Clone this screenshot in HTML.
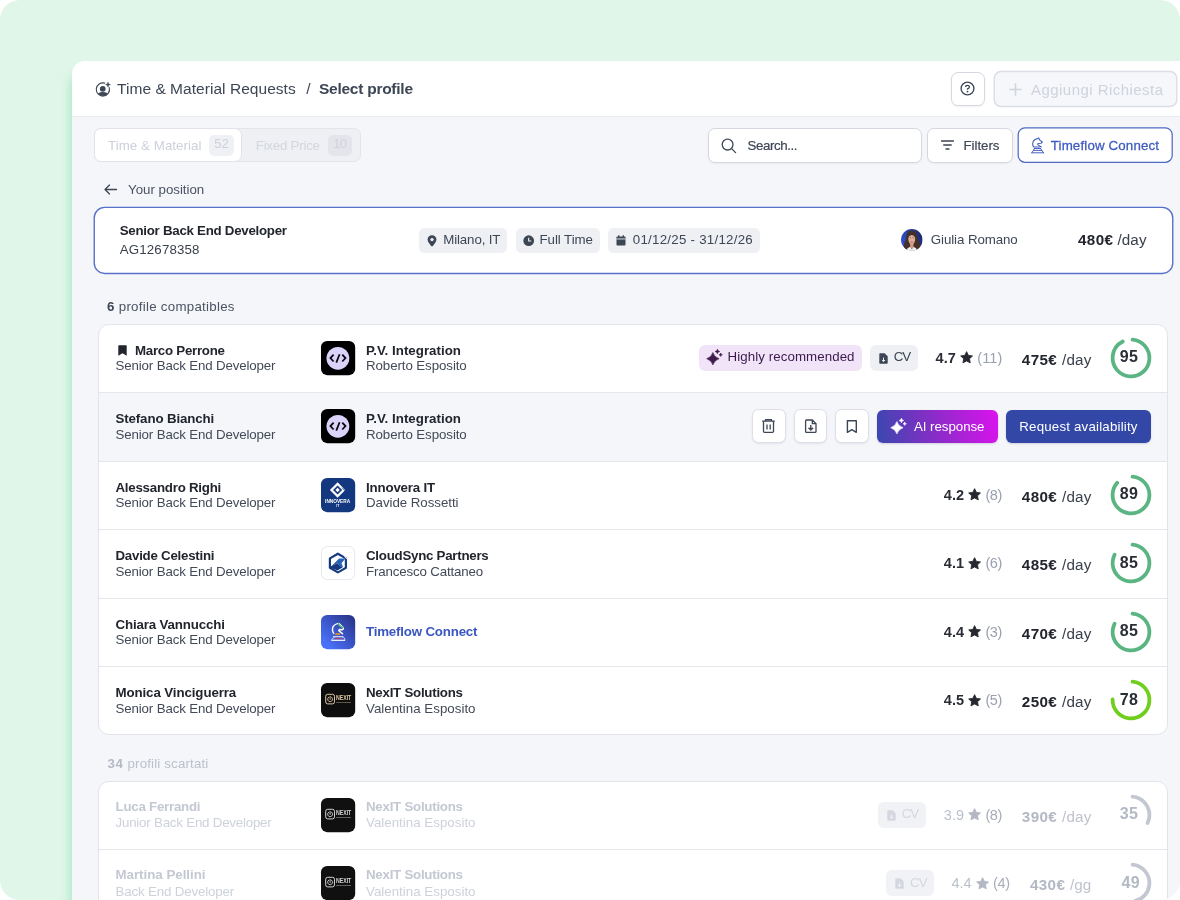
<!DOCTYPE html>
<html lang="en"><head><meta charset="utf-8"><title>Select profile</title>
<style>
*{box-sizing:border-box}
html,body{margin:0;padding:0;background:#fff}
body{width:1180px;height:900px;overflow:hidden;position:relative;font-family:"Liberation Sans",sans-serif;}
.bg{position:absolute;left:0;top:0;width:1180px;height:900px;background:#dff6e8;border-radius:20px;overflow:hidden}
.card{position:absolute;left:72.1px;top:61px;width:1300px;height:1000px;background:#f5f6fa;border-radius:13px 0 0 0;box-shadow:-2px 12px 9px 0 rgba(100,215,150,.42)}
.hdr{position:absolute;left:72.1px;top:61px;width:1300px;height:55.5px;background:#fff;border-radius:13px 0 0 0;border-bottom:1.5px solid #e9ebf0}
.t{position:absolute;line-height:1;white-space:nowrap}
.bg{will-change:transform}
.box{position:absolute;}
svg{position:absolute;overflow:visible}
</style></head>
<body>
<div class="bg">
<div class="card"></div><div class="hdr"></div>
<svg style="left:94.5px;top:81.5px" width="16" height="16" viewBox="0 0 16 16"><path d="M14.2 5.6A6.6 6.6 0 1 1 9.7 1.15" fill="none" stroke="#3d4655" stroke-width="1.1" stroke-linecap="round"/><circle cx="7.75" cy="6.8" r="2.9" fill="#3d4655"/><path d="M2.9 11.3Q7.8 8.6 12.7 11.3Q10.9 14.1 7.8 14.1Q4.7 14.1 2.9 11.3Z" fill="#3d4655"/><path d="M13 0.2Q13.2 2.4 15.4 2.6Q13.2 2.8 13 5Q12.8 2.8 10.6 2.6Q12.8 2.4 13 0.2Z" fill="#3d4655" stroke="#3d4655" stroke-width="0.5" stroke-linejoin="round"/></svg>
<span class="t" style="left:117px;top:81.28px;font-size:15.5px;color:#3d4655;letter-spacing:0.043px;">Time &amp; Material Requests</span>
<span class="t" style="left:306.3px;top:81.28px;font-size:15.5px;color:#3d4655;">/</span>
<span class="t" style="left:319px;top:81.28px;font-size:15.5px;color:#3d4655;font-weight:700;letter-spacing:-0.257px;">Select profile</span>
<div class="box" style="left:951px;top:72px;width:34px;height:34px;border:1px solid #d5d8e0;border-radius:7px;background:#fff;box-shadow:0 1px 2px rgba(0,0,0,.06)"></div>
<svg style="left:960px;top:81.2px" width="15" height="15" viewBox="0 0 15 15"><circle cx="7.5" cy="7.5" r="6.4" fill="none" stroke="#3d4655" stroke-width="1.35"/><path d="M5.6 6.1 Q5.6 4.3 7.5 4.3 Q9.4 4.3 9.4 6 Q9.4 7.1 7.5 7.9 L7.5 8.7" fill="none" stroke="#3d4655" stroke-width="1.3"/><circle cx="7.5" cy="10.6" r="0.9" fill="#3d4655"/></svg>
<svg style="left:992px;top:69px" width="188" height="40" viewBox="0 0 188 40"><rect x="2.2" y="2.5" width="182.6" height="35" rx="6.8" fill="#f6f7fb" stroke="#dadde6" stroke-width="1.4"/></svg>
<svg style="left:1008.5px;top:82.5px" width="13" height="13" viewBox="0 0 13 13"><path d="M6.5 0.3V12.7M0.3 6.5H12.7" stroke="#d0d4dd" stroke-width="1.5"/></svg>
<span class="t" style="left:1031px;top:81.50px;font-size:15px;color:#cfd3dc;letter-spacing:0.456px;">Aggiungi Richiesta</span>
<div class="box" style="left:94px;top:128px;width:266.5px;height:34px;border:1px solid #e3e5eb;border-radius:7px;background:#eff0f4"></div>
<div class="box" style="left:94px;top:128px;width:148px;height:34px;border:1px solid #e1e3ea;border-radius:7px;background:#fff"></div>
<span class="t" style="left:108px;top:138.74px;font-size:13.3px;color:#ccd0da;letter-spacing:0.064px;">Time &amp; Material</span>
<div class="box" style="left:209px;top:134.5px;width:25px;height:21.5px;border-radius:5px;background:#f0f1f5"></div>
<span class="t" style="left:214.25px;top:137.40px;font-size:13px;color:#ccd0da;letter-spacing:0.031px;">52</span>
<span class="t" style="left:255.75px;top:138.74px;font-size:13.3px;color:#d3d6de;letter-spacing:-0.227px;">Fixed Price</span>
<div class="box" style="left:327.5px;top:134.5px;width:24.5px;height:21.5px;border-radius:5px;background:#e3e5ea"></div>
<span class="t" style="left:333.25px;top:137.40px;font-size:13px;color:#cfd2da;letter-spacing:-0.719px;">10</span>
<div class="box" style="left:708px;top:128px;width:214px;height:34.5px;border:1px solid #d5d8e0;border-radius:7px;background:#fff;box-shadow:0 1px 2px rgba(0,0,0,.05)"></div>
<svg style="left:721px;top:138px" width="16" height="16" viewBox="0 0 16 16"><circle cx="6.6" cy="6.6" r="5.4" fill="none" stroke="#3d4655" stroke-width="1.3"/><path d="M10.6 10.6L14.6 14.6" stroke="#3d4655" stroke-width="1.3" stroke-linecap="round"/></svg>
<span class="t" style="left:747.5px;top:139.14px;font-size:13.3px;color:#3d4655;letter-spacing:-0.402px;-webkit-text-stroke:0.2px #3d4655;">Search...</span>
<div class="box" style="left:926.5px;top:128px;width:86.5px;height:34.5px;border:1px solid #d5d8e0;border-radius:7px;background:#fff;box-shadow:0 1px 2px rgba(0,0,0,.05)"></div>
<svg style="left:941px;top:140px" width="13" height="10" viewBox="0 0 13 10"><path d="M0.5 1H12.5M2.7 5H10.3M5 9H8" stroke="#3d4655" stroke-width="1.3" stroke-linecap="round"/></svg>
<span class="t" style="left:963.5px;top:139.14px;font-size:13.3px;color:#3d4655;letter-spacing:-0.034px;-webkit-text-stroke:0.2px #3d4655;">Filters</span>
<svg style="left:1016px;top:126px" width="160" height="39" viewBox="0 0 160 39"><rect x="2.2" y="1.9" width="154" height="34.4" rx="6.8" fill="#fff" stroke="#4f6ac4" stroke-width="1.25"/></svg>
<svg style="left:1030.5px;top:136.5px" width="14" height="17" viewBox="0 0 14 17"><g fill="none" stroke="#3f5bbf" stroke-width="1.1" stroke-linejoin="round" stroke-linecap="round"><path d="M7.8 1L6.5 1.6Q2.2 2.4 1.7 6.2Q1.5 8.6 2.7 10H8.3M7.8 1L8.5 2.9L11.3 5L10 6.3L7 6.5Q6.3 7.4 7.4 8.1L10.3 10"/><path d="M3.4 11.5H9.6M2.4 13.4H10.8M0.8 15.8H12.6M3.4 11.5L2.4 13.4L0.8 15.8M9.6 11.5L10.8 13.4L12.6 15.8" stroke-width="0.95"/></g></svg>
<span class="t" style="left:1050.75px;top:139.14px;font-size:13.3px;color:#3f5bbf;letter-spacing:0.155px;-webkit-text-stroke:0.28px #3f5bbf;">Timeflow Connect</span>
<svg style="left:104px;top:184px" width="13" height="11" viewBox="0 0 13 11"><path d="M12.5 5.5H1M5.5 1L1 5.5L5.5 10" fill="none" stroke="#3d4655" stroke-width="1.3" stroke-linecap="round" stroke-linejoin="round"/></svg>
<span class="t" style="left:128px;top:183.04px;font-size:13.3px;color:#4b5362;letter-spacing:-0.013px;">Your position</span>
<svg style="left:93px;top:206px" width="1082" height="69" viewBox="0 0 1082 69"><rect x="1.25" y="1.35" width="1078.5" height="66.1" rx="10.5" fill="#fff" stroke="#5571c9" stroke-width="1.4"/></svg>
<span class="t" style="left:119.75px;top:224.24px;font-size:13.3px;color:#22252d;font-weight:700;letter-spacing:-0.268px;">Senior Back End Developer</span>
<span class="t" style="left:119.75px;top:242.84px;font-size:13.3px;color:#3a404c;letter-spacing:0.153px;">AG12678358</span>
<div class="box" style="left:419.2px;top:227.8px;width:87.8px;height:25.2px;border-radius:5.5px;background:#eef0f4"></div>
<svg style="left:427px;top:235px" width="10" height="12" viewBox="0 0 10 12"><path d="M5 0.3C2.4 0.3 0.6 2.2 0.6 4.6C0.6 7.6 5 11.8 5 11.8C5 11.8 9.4 7.6 9.4 4.6C9.4 2.2 7.6 0.3 5 0.3Z" fill="#3d4655"/><circle cx="5" cy="4.6" r="1.7" fill="#eef0f4"/></svg>
<span class="t" style="left:443.25px;top:233.14px;font-size:13.3px;color:#3d4655;letter-spacing:-0.127px;">Milano, IT</span>
<div class="box" style="left:515.8px;top:227.8px;width:83.8px;height:25.2px;border-radius:5.5px;background:#eef0f4"></div>
<svg style="left:522.9px;top:234.6px" width="11.4" height="11.4" viewBox="0 0 11 11"><circle cx="5.5" cy="5.5" r="5.2" fill="#3d4655"/><path d="M5.5 2.6V5.8H8" fill="none" stroke="#eef0f4" stroke-width="1.1"/></svg>
<span class="t" style="left:539.5px;top:233.14px;font-size:13.3px;color:#3d4655;letter-spacing:-0.055px;">Full Time</span>
<div class="box" style="left:608.3px;top:227.8px;width:151.8px;height:25.2px;border-radius:5.5px;background:#eef0f4"></div>
<svg style="left:616px;top:235px" width="10" height="11" viewBox="0 0 10 11"><path d="M0.5 2.2Q0.5 1.4 1.3 1.4H8.7Q9.5 1.4 9.5 2.2V9.8Q9.5 10.6 8.7 10.6H1.3Q0.5 10.6 0.5 9.8Z" fill="#3d4655"/><rect x="2.1" y="0.2" width="1.3" height="2.2" fill="#3d4655"/><rect x="6.6" y="0.2" width="1.3" height="2.2" fill="#3d4655"/><rect x="0.5" y="3.5" width="9" height="0.9" fill="#eef0f4"/></svg>
<span class="t" style="left:632.75px;top:233.14px;font-size:13.3px;color:#3d4655;letter-spacing:0.259px;">01/12/25 - 31/12/26</span>
<svg style="left:900.7px;top:229.4px" width="21.6" height="21.6" viewBox="0 0 21.6 21.6"><defs><clipPath id="av"><circle cx="10.8" cy="10.8" r="10.8"/></clipPath><linearGradient id="avg" x1="0" y1="0.6" x2="1" y2="0.3"><stop offset="0" stop-color="#3152cc"/><stop offset="1" stop-color="#1a2872"/></linearGradient></defs><g clip-path="url(#av)"><rect width="21.6" height="21.6" fill="url(#avg)"/><path d="M10.8 1.4C6.5 1.4 5.4 5 5.2 8.5C5 12 2.6 14 2.8 17C3 19.5 5 20.6 6.5 21L15.5 21C17.5 20.4 19.6 19 19.6 16.5C19.6 13.5 17 12 16.6 8.5C16.2 5 15.2 1.4 10.8 1.4Z" fill="#46302a"/><rect x="9.1" y="13.5" width="3.4" height="6" fill="#cd9a80"/><ellipse cx="10.75" cy="10" rx="3.45" ry="5.3" fill="#dcae94"/><path d="M7 8.6Q7.6 3.9 10.8 3.7Q14 3.9 14.5 8.6Q12.8 5.9 10.8 5.9Q8.8 5.9 7 8.6Z" fill="#46302a"/><ellipse cx="9.3" cy="8.7" rx="0.75" ry="0.45" fill="#6a4548"/><ellipse cx="12.2" cy="8.7" rx="0.75" ry="0.45" fill="#6a4548"/><ellipse cx="10.75" cy="13.1" rx="1.15" ry="0.5" fill="#b24f60"/><path d="M5.2 21.8Q6.3 18.4 9 18L10.8 20.2L12.7 18Q15.4 18.4 16.5 21.8Z" fill="#f3efec"/></g></svg>
<span class="t" style="left:930.75px;top:233.24px;font-size:13.3px;color:#3d4655;letter-spacing:-0.079px;">Giulia Romano</span>
<span class="t" style="left:1078px;top:232.23px;font-size:15.2px;color:#22252d;font-weight:700;letter-spacing:0.401px;">480€</span>
<span class="t" style="left:1117.5px;top:232.23px;font-size:15.2px;color:#3a404c;letter-spacing:0.094px;">/day</span>
<span class="t" style="left:107px;top:300.14px;font-size:13.3px;color:#3d4655;font-weight:700;">6</span>
<span class="t" style="left:118.75px;top:300.14px;font-size:13.3px;color:#4b5362;letter-spacing:0.271px;">profile compatibles</span>
<div class="box" style="left:98.3px;top:324px;width:1069.7px;height:411px;border:1px solid #e2e4ea;border-radius:11px;background:#fff;overflow:hidden">
<div class="box" style="left:0;top:67px;width:1070px;height:69px;background:#f5f6fa"></div>
<div class="box" style="left:0;top:67px;width:1070px;height:1px;background:#e4e6ec"></div>
<div class="box" style="left:0;top:136px;width:1070px;height:1px;background:#e4e6ec"></div>
<div class="box" style="left:0;top:204px;width:1070px;height:1px;background:#e4e6ec"></div>
<div class="box" style="left:0;top:273px;width:1070px;height:1px;background:#e4e6ec"></div>
<div class="box" style="left:0;top:341px;width:1070px;height:1px;background:#e4e6ec"></div>
</div>
<svg style="left:117.5px;top:344.6px" width="9" height="11" viewBox="0 0 9 11"><path d="M0.3 0.8Q0.3 0.2 0.9 0.2H8.1Q8.7 0.2 8.7 0.8V10.8L4.5 8.2L0.3 10.8Z" fill="#22252d"/></svg>
<span class="t" style="left:135px;top:343.54px;font-size:13.3px;color:#22252d;font-weight:700;letter-spacing:-0.260px;">Marco Perrone</span>
<span class="t" style="left:115.5px;top:359.29px;font-size:13.3px;color:#434a57;letter-spacing:-0.140px;">Senior Back End Developer</span>
<svg style="left:320.9px;top:340.90px" width="34.2" height="34.2" viewBox="0 0 34.2 34.2"><rect width="34.2" height="34.2" rx="6.2" fill="#000"/><circle cx="16.9" cy="17.3" r="11.4" fill="#dcd3fa"/><path d="M12.6 13.7L9.4 17.1L12.6 20.5M21.3 13.7L24.5 17.1L21.3 20.5M18.6 13.2L15.3 21.6" fill="none" stroke="#08080c" stroke-width="1.75"/></svg>
<span class="t" style="left:366px;top:343.54px;font-size:13.3px;color:#22252d;font-weight:700;letter-spacing:0.027px;">P.V. Integration</span>
<span class="t" style="left:366px;top:359.29px;font-size:13.3px;color:#434a57;letter-spacing:-0.083px;">Roberto Esposito</span>
<span class="t" style="left:935.5999999999999px;top:350.53px;font-size:14.5px;color:#2a2d35;font-weight:700;letter-spacing:0.014px;">4.7</span>
<svg style="left:959.80px;top:351.00px" width="13.2" height="13" viewBox="0 0 13.2 13"><path d="M6.60 0.65L8.39 4.38L12.50 4.93L9.50 7.79L10.24 11.87L6.60 9.90L2.96 11.87L3.70 7.79L0.70 4.93L4.81 4.38Z" fill="#26282f" stroke="#26282f" stroke-width="0.9" stroke-linejoin="round"/></svg>
<span class="t" style="left:977.1999999999999px;top:350.53px;font-size:14.5px;color:#9aa1ae;letter-spacing:0.160px;">(11)</span>
<span class="t" style="left:1021.8px;top:351.63px;font-size:15.2px;color:#22252d;font-weight:700;letter-spacing:0.401px;">475€</span>
<span class="t" style="left:1062.0px;top:351.63px;font-size:15.2px;color:#3a404c;letter-spacing:0.194px;">/day</span>
<svg style="left:1108.8px;top:335.90000000000003px" width="44" height="44" viewBox="-22 -22 44 44"><circle r="18.4" fill="none" stroke="#5bb582" stroke-width="3.8" stroke-linecap="round" stroke-dasharray="104.83 115.61" transform="rotate(-85.2)"/></svg>
<span class="t" style="left:1078.9px;width:100px;text-align:center;top:349.16px;font-size:16px;color:#2a2d35;font-weight:700;letter-spacing:0.2px;">95</span>
<span class="t" style="left:115.5px;top:412.04px;font-size:13.3px;color:#22252d;font-weight:700;letter-spacing:-0.124px;">Stefano Bianchi</span>
<span class="t" style="left:115.5px;top:427.79px;font-size:13.3px;color:#434a57;letter-spacing:-0.140px;">Senior Back End Developer</span>
<svg style="left:320.9px;top:409.40px" width="34.2" height="34.2" viewBox="0 0 34.2 34.2"><rect width="34.2" height="34.2" rx="6.2" fill="#000"/><circle cx="16.9" cy="17.3" r="11.4" fill="#dcd3fa"/><path d="M12.6 13.7L9.4 17.1L12.6 20.5M21.3 13.7L24.5 17.1L21.3 20.5M18.6 13.2L15.3 21.6" fill="none" stroke="#08080c" stroke-width="1.75"/></svg>
<span class="t" style="left:366px;top:412.04px;font-size:13.3px;color:#22252d;font-weight:700;letter-spacing:0.027px;">P.V. Integration</span>
<span class="t" style="left:366px;top:427.79px;font-size:13.3px;color:#434a57;letter-spacing:-0.083px;">Roberto Esposito</span>
<span class="t" style="left:115.5px;top:480.54px;font-size:13.3px;color:#22252d;font-weight:700;letter-spacing:-0.241px;">Alessandro Righi</span>
<span class="t" style="left:115.5px;top:496.29px;font-size:13.3px;color:#434a57;letter-spacing:-0.140px;">Senior Back End Developer</span>
<svg style="left:320.9px;top:477.90px" width="34.2" height="34.2" viewBox="0 0 34.2 34.2"><rect width="34.2" height="34.2" rx="6.2" fill="#14387f"/><path d="M16.6 4.2L24.3 12L16.6 19.8L8.9 12Z" fill="#fff"/><path d="M16.6 7.4L21.2 12L16.6 16.6L12 12Z" fill="#14387f"/><path d="M16.6 9.8L18.8 12L16.6 14.2L14.4 12Z" fill="#fff"/><path d="M21 9.6L24.6 13.2" stroke="#14387f" stroke-width="0.9"/><path d="M10.6 13.4L16.6 19.4" stroke="#14387f" stroke-width="0"/><text x="16.6" y="24.9" font-size="4.7" font-weight="700" fill="#fff" text-anchor="middle" font-family="Liberation Sans, sans-serif" textLength="25" lengthAdjust="spacingAndGlyphs">INNOVERA</text><text x="16.7" y="29" font-size="3.3" font-weight="700" fill="#fff" text-anchor="middle" font-family="Liberation Sans, sans-serif">IT</text></svg>
<span class="t" style="left:366px;top:480.54px;font-size:13.3px;color:#22252d;font-weight:700;letter-spacing:-0.169px;">Innovera IT</span>
<span class="t" style="left:366px;top:496.29px;font-size:13.3px;color:#434a57;letter-spacing:-0.045px;">Davide Rossetti</span>
<span class="t" style="left:943.8px;top:487.53px;font-size:14.5px;color:#2a2d35;font-weight:700;letter-spacing:0.014px;">4.2</span>
<svg style="left:968.00px;top:488.00px" width="13.2" height="13" viewBox="0 0 13.2 13"><path d="M6.60 0.65L8.39 4.38L12.50 4.93L9.50 7.79L10.24 11.87L6.60 9.90L2.96 11.87L3.70 7.79L0.70 4.93L4.81 4.38Z" fill="#26282f" stroke="#26282f" stroke-width="0.9" stroke-linejoin="round"/></svg>
<span class="t" style="left:985.4px;top:487.53px;font-size:14.5px;color:#9aa1ae;letter-spacing:-0.367px;">(8)</span>
<span class="t" style="left:1021.8px;top:488.63px;font-size:15.2px;color:#22252d;font-weight:700;letter-spacing:0.401px;">480€</span>
<span class="t" style="left:1062.0px;top:488.63px;font-size:15.2px;color:#3a404c;letter-spacing:0.194px;">/day</span>
<svg style="left:1108.8px;top:472.90000000000003px" width="44" height="44" viewBox="-22 -22 44 44"><circle r="18.4" fill="none" stroke="#5bb582" stroke-width="3.8" stroke-linecap="round" stroke-dasharray="97.89 115.61" transform="rotate(-85.2)"/></svg>
<span class="t" style="left:1078.9px;width:100px;text-align:center;top:486.16px;font-size:16px;color:#2a2d35;font-weight:700;letter-spacing:0.2px;">89</span>
<span class="t" style="left:115.5px;top:549.04px;font-size:13.3px;color:#22252d;font-weight:700;letter-spacing:-0.249px;">Davide Celestini</span>
<span class="t" style="left:115.5px;top:564.79px;font-size:13.3px;color:#434a57;letter-spacing:-0.140px;">Senior Back End Developer</span>
<svg style="left:320.9px;top:546.40px" width="34.2" height="34.2" viewBox="0 0 34.2 34.2"><rect x="0.5" y="0.5" width="33.2" height="33.2" rx="6" fill="#fff" stroke="#e6e8ee"/><path d="M16.9 7.7L24.9 12.4V21.7L16.9 26.4L8.9 21.7V12.4Z" fill="none" stroke="#163a80" stroke-width="2.2" stroke-linejoin="round"/><path d="M23.4 10.4L26 13.2" stroke="#fff" stroke-width="0.9"/><path d="M18.1 12.5H24.4L20.5 17.2L22.2 21.2L21.5 21.8L16.1 17.2L10.6 20Z" fill="#2a62b8"/><path d="M10 20.2L16.1 17.2L21.6 21.7L16.7 24.6L10 21.8Z" fill="#163a80"/><path d="M16.8 24.9L23.6 20.6" stroke="#fff" stroke-width="0.8"/></svg>
<span class="t" style="left:366px;top:549.04px;font-size:13.3px;color:#22252d;font-weight:700;letter-spacing:-0.256px;">CloudSync Partners</span>
<span class="t" style="left:366px;top:564.79px;font-size:13.3px;color:#434a57;letter-spacing:-0.147px;">Francesco Cattaneo</span>
<span class="t" style="left:943.8px;top:556.03px;font-size:14.5px;color:#2a2d35;font-weight:700;letter-spacing:0.014px;">4.1</span>
<svg style="left:968.00px;top:556.50px" width="13.2" height="13" viewBox="0 0 13.2 13"><path d="M6.60 0.65L8.39 4.38L12.50 4.93L9.50 7.79L10.24 11.87L6.60 9.90L2.96 11.87L3.70 7.79L0.70 4.93L4.81 4.38Z" fill="#26282f" stroke="#26282f" stroke-width="0.9" stroke-linejoin="round"/></svg>
<span class="t" style="left:985.4px;top:556.03px;font-size:14.5px;color:#9aa1ae;letter-spacing:-0.367px;">(6)</span>
<span class="t" style="left:1021.8px;top:557.13px;font-size:15.2px;color:#22252d;font-weight:700;letter-spacing:0.401px;">485€</span>
<span class="t" style="left:1062.0px;top:557.13px;font-size:15.2px;color:#3a404c;letter-spacing:0.194px;">/day</span>
<svg style="left:1108.8px;top:541.4px" width="44" height="44" viewBox="-22 -22 44 44"><circle r="18.4" fill="none" stroke="#5bb582" stroke-width="3.8" stroke-linecap="round" stroke-dasharray="93.27 115.61" transform="rotate(-85.2)"/></svg>
<span class="t" style="left:1078.9px;width:100px;text-align:center;top:554.66px;font-size:16px;color:#2a2d35;font-weight:700;letter-spacing:0.2px;">85</span>
<span class="t" style="left:115.5px;top:617.54px;font-size:13.3px;color:#22252d;font-weight:700;letter-spacing:-0.140px;">Chiara Vannucchi</span>
<span class="t" style="left:115.5px;top:633.29px;font-size:13.3px;color:#434a57;letter-spacing:-0.140px;">Senior Back End Developer</span>
<svg style="left:320.9px;top:614.90px" width="34.2" height="34.2" viewBox="0 0 34.2 34.2"><defs><linearGradient id="tfg" x1="1" y1="0" x2="0.15" y2="0.85"><stop offset="0" stop-color="#273080"/><stop offset="0.55" stop-color="#3a53c4"/><stop offset="1" stop-color="#4a72f8"/></linearGradient></defs><rect width="34.2" height="34.2" rx="6.2" fill="url(#tfg)"/><path d="M17.9 8.4Q12.2 9.2 11.5 13.6Q11.2 16.6 12.6 18.4M17.9 8.4L22 12.6L22.4 13.8L21 14.8L18.2 14.6Q17.4 15.6 18.6 16.4L21.6 18.8" fill="none" stroke="#fff" stroke-width="1.45" stroke-linejoin="round" stroke-linecap="round"/><path d="M17.6 8.4L18.4 10.6L22 12.6" fill="none" stroke="#4cc46a" stroke-width="1.3" stroke-linecap="round" stroke-linejoin="round"/><rect x="14.2" y="18.2" width="4.9" height="1.7" fill="#e0962a"/><path d="M11.7 21.3H22.2L23 22.6H12.6Z" fill="#fff"/><rect x="13.9" y="23.2" width="6.9" height="0.9" fill="#e8364a"/><rect x="13.9" y="22.5" width="6.9" height="0.7" fill="#3547b0"/><path d="M10.3 24.7H24.2V25.9H10.3Z" fill="#fff"/><path d="M12.6 22.6L10.6 24.7M23 22.6L24 24.7" stroke="#fff" stroke-width="0.8"/></svg>
<span class="t" style="left:366px;top:625.34px;font-size:13.3px;color:#3a56c0;font-weight:700;letter-spacing:-0.184px;">Timeflow Connect</span>
<span class="t" style="left:943.8px;top:624.53px;font-size:14.5px;color:#2a2d35;font-weight:700;letter-spacing:0.014px;">4.4</span>
<svg style="left:968.00px;top:625.00px" width="13.2" height="13" viewBox="0 0 13.2 13"><path d="M6.60 0.65L8.39 4.38L12.50 4.93L9.50 7.79L10.24 11.87L6.60 9.90L2.96 11.87L3.70 7.79L0.70 4.93L4.81 4.38Z" fill="#26282f" stroke="#26282f" stroke-width="0.9" stroke-linejoin="round"/></svg>
<span class="t" style="left:985.4px;top:624.53px;font-size:14.5px;color:#9aa1ae;letter-spacing:-0.367px;">(3)</span>
<span class="t" style="left:1021.8px;top:625.63px;font-size:15.2px;color:#22252d;font-weight:700;letter-spacing:0.401px;">470€</span>
<span class="t" style="left:1062.0px;top:625.63px;font-size:15.2px;color:#3a404c;letter-spacing:0.194px;">/day</span>
<svg style="left:1108.8px;top:609.9px" width="44" height="44" viewBox="-22 -22 44 44"><circle r="18.4" fill="none" stroke="#5bb582" stroke-width="3.8" stroke-linecap="round" stroke-dasharray="93.27 115.61" transform="rotate(-85.2)"/></svg>
<span class="t" style="left:1078.9px;width:100px;text-align:center;top:623.16px;font-size:16px;color:#2a2d35;font-weight:700;letter-spacing:0.2px;">85</span>
<span class="t" style="left:115.5px;top:686.04px;font-size:13.3px;color:#22252d;font-weight:700;letter-spacing:-0.098px;">Monica Vinciguerra</span>
<span class="t" style="left:115.5px;top:701.79px;font-size:13.3px;color:#434a57;letter-spacing:-0.140px;">Senior Back End Developer</span>
<svg style="left:320.9px;top:683.40px" width="34.2" height="34.2" viewBox="0 0 34.2 34.2"><rect width="34.2" height="34.2" rx="6.2" fill="#0d0d0d"/><rect x="4.7" y="11.3" width="8.8" height="9.6" rx="2" fill="none" stroke="#dcc6a2" stroke-width="1"/><path d="M9.1 13.3V16.4M7.6 14.2Q6.2 15.4 6.8 17.1Q7.5 18.7 9.1 18.7Q10.7 18.7 11.4 17.1Q12 15.4 10.6 14.2" fill="none" stroke="#dcc6a2" stroke-width="0.9" stroke-linecap="round"/><text x="14.9" y="17.1" font-size="6.8" font-weight="700" fill="#dcc6a2" font-family="Liberation Sans, sans-serif" textLength="15.4" lengthAdjust="spacingAndGlyphs">NEXIT</text><text x="15.2" y="20.3" font-size="2.4" font-weight="700" fill="#c9b08a" font-family="Liberation Sans, sans-serif" textLength="14.9" lengthAdjust="spacingAndGlyphs">SOLUTIONS</text></svg>
<span class="t" style="left:366px;top:686.04px;font-size:13.3px;color:#22252d;font-weight:700;letter-spacing:-0.249px;">NexIT Solutions</span>
<span class="t" style="left:366px;top:701.79px;font-size:13.3px;color:#434a57;letter-spacing:0.020px;">Valentina Esposito</span>
<span class="t" style="left:943.8px;top:693.03px;font-size:14.5px;color:#2a2d35;font-weight:700;letter-spacing:0.014px;">4.5</span>
<svg style="left:968.00px;top:693.50px" width="13.2" height="13" viewBox="0 0 13.2 13"><path d="M6.60 0.65L8.39 4.38L12.50 4.93L9.50 7.79L10.24 11.87L6.60 9.90L2.96 11.87L3.70 7.79L0.70 4.93L4.81 4.38Z" fill="#26282f" stroke="#26282f" stroke-width="0.9" stroke-linejoin="round"/></svg>
<span class="t" style="left:985.4px;top:693.03px;font-size:14.5px;color:#9aa1ae;letter-spacing:-0.367px;">(5)</span>
<span class="t" style="left:1021.8px;top:694.13px;font-size:15.2px;color:#22252d;font-weight:700;letter-spacing:0.401px;">250€</span>
<span class="t" style="left:1062.0px;top:694.13px;font-size:15.2px;color:#3a404c;letter-spacing:0.194px;">/day</span>
<svg style="left:1108.8px;top:678.4px" width="44" height="44" viewBox="-22 -22 44 44"><circle r="18.4" fill="none" stroke="#6fcf1c" stroke-width="3.8" stroke-linecap="round" stroke-dasharray="85.18 115.61" transform="rotate(-85.2)"/></svg>
<span class="t" style="left:1078.9px;width:100px;text-align:center;top:691.66px;font-size:16px;color:#2a2d35;font-weight:700;letter-spacing:0.2px;">78</span>
<div class="box" style="left:699px;top:344.8px;width:162.5px;height:25.8px;border-radius:6px;background:#f2e4f8"></div>
<svg style="left:706px;top:349.3px" width="17" height="17" viewBox="0 0 17 17"><path d="M6.9 3.5Q8.4 8.2 13.1 9.7Q8.4 11.2 6.9 15.9Q5.4 11.2 0.7 9.7Q5.4 8.2 6.9 3.5ZM11.4 0.2Q11.65 2.25 13.7 2.5Q11.65 2.75 11.4 4.8Q11.15 2.75 9.1 2.5Q11.15 2.25 11.4 0.2ZM14.7 4.05Q15 5.45 16.4 5.75Q15 6.05 14.7 7.45Q14.4 6.05 13 5.75Q14.4 5.45 14.7 4.05Z" fill="#3f1a4d" stroke="#3f1a4d" stroke-width="0.6" stroke-linejoin="round"/></svg>
<span class="t" style="left:727.5px;top:350.24px;font-size:13.3px;color:#3a1a4c;letter-spacing:0.080px;">Highly recommended</span>
<div class="box" style="left:870px;top:344.8px;width:48px;height:25.8px;border-radius:6px;background:#eef0f4"></div>
<svg style="left:878.5px;top:352.6px" width="9" height="11" viewBox="0 0 9 11"><path d="M0.3 1Q0.3 0.2 1.1 0.2H5.6L8.7 3.3V10Q8.7 10.8 7.9 10.8H1.1Q0.3 10.8 0.3 10Z" fill="#3d4655"/><path d="M4.5 4.6V8.4M2.9 7L4.5 8.6L6.1 7" fill="none" stroke="#eef0f4" stroke-width="1"/></svg>
<span class="t" style="left:893.75px;top:350.24px;font-size:13.3px;color:#3d4655;letter-spacing:-0.984px;">CV</span>
<div class="box" style="left:752.1px;top:409.30px;width:33.6px;height:33.8px;border:1px solid #dcdfe6;border-radius:6.5px;background:#fff;box-shadow:0 1px 2px rgba(20,30,60,.08)"></div>
<svg style="left:762.1px;top:419.10px" width="14" height="15" viewBox="0 0 14 15"><g fill="none" stroke="#3d4655" stroke-width="1.3" stroke-linejoin="round"><path d="M0.2 2.1H12.8M3.5 2V0.7H9.5V2M1.5 2.3V12.3Q1.5 13.3 2.5 13.3H10.5Q11.5 13.3 11.5 12.3V2.3M5 5.4V10.4M8.2 5.4V10.4"/></g></svg>
<div class="box" style="left:793.6px;top:409.30px;width:33.6px;height:33.8px;border:1px solid #dcdfe6;border-radius:6.5px;background:#fff;box-shadow:0 1px 2px rgba(20,30,60,.08)"></div>
<svg style="left:803.6px;top:419.10px" width="14" height="15" viewBox="0 0 14 15"><g fill="none" stroke="#3d4655" stroke-width="1.3" stroke-linejoin="round"><path d="M2.6 1H8.4L12 4.6V12.4Q12 13.4 11 13.4H2.6Q1.6 13.4 1.6 12.4V2Q1.6 1 2.6 1ZM8.3 1.2V4.7H11.8"/><path d="M6.8 5.9V10.8M4.5 8.7L6.8 11L9.1 8.7" stroke-width="1.4"/></g></svg>
<div class="box" style="left:835.2px;top:409.30px;width:33.6px;height:33.8px;border:1px solid #dcdfe6;border-radius:6.5px;background:#fff;box-shadow:0 1px 2px rgba(20,30,60,.08)"></div>
<svg style="left:845.2px;top:419.10px" width="14" height="15" viewBox="0 0 14 15"><g fill="none" stroke="#3d4655" stroke-width="1.3" stroke-linejoin="round"><path d="M2.4 1.7H11.3V13.3L6.85 10.7L2.4 13.3Z" stroke-width="1.4"/></g></svg>
<div class="box" style="left:876.8px;top:409.70px;width:121.2px;height:33.1px;border-radius:6px;background:linear-gradient(78deg,#3848ae 0%,#8a2cc8 48%,#dc12ee 100%);box-shadow:0 1px 2px rgba(40,30,90,.18)"></div>
<svg style="left:889.9px;top:417.70px" width="17" height="17" viewBox="0 0 17 17"><path d="M6.9 3.5Q8.4 8.2 13.1 9.7Q8.4 11.2 6.9 15.9Q5.4 11.2 0.7 9.7Q5.4 8.2 6.9 3.5ZM11.4 0.2Q11.65 2.25 13.7 2.5Q11.65 2.75 11.4 4.8Q11.15 2.75 9.1 2.5Q11.15 2.25 11.4 0.2ZM14.7 4.05Q15 5.45 16.4 5.75Q15 6.05 14.7 7.45Q14.4 6.05 13 5.75Q14.4 5.45 14.7 4.05Z" fill="#fff" stroke="#fff" stroke-width="0.6" stroke-linejoin="round"/></svg>
<span class="t" style="left:914px;top:420.04px;font-size:13.3px;color:#fff;letter-spacing:-0.047px;">AI response</span>
<div class="box" style="left:1005.5px;top:409.70px;width:145.8px;height:33.1px;border-radius:6px;background:#3247a6;box-shadow:0 1px 2px rgba(40,30,90,.18)"></div>
<span class="t" style="left:1019.25px;top:420.04px;font-size:13.3px;color:#fff;letter-spacing:0.194px;">Request availability</span>
<span class="t" style="left:107.5px;top:757.49px;font-size:13.3px;color:#b4b9c4;font-weight:700;letter-spacing:0.703px;">34</span>
<span class="t" style="left:127.5px;top:757.49px;font-size:13.3px;color:#bcc0ca;letter-spacing:0.161px;">profili scartati</span>
<div class="box" style="left:98.3px;top:781px;width:1069.7px;height:200px;border:1px solid #e2e4ea;border-radius:11px;background:#fff;overflow:hidden">
<div class="box" style="left:0;top:67px;width:1070px;height:1px;background:#e4e6ec"></div>
<div class="box" style="left:0;top:136px;width:1070px;height:1px;background:#e4e6ec"></div>
</div>
<span class="t" style="left:115.5px;top:799.84px;font-size:13.3px;color:#c3c8d2;font-weight:700;letter-spacing:-0.245px;">Luca Ferrandi</span>
<span class="t" style="left:115.5px;top:816.29px;font-size:13.3px;color:#cdd1da;letter-spacing:-0.204px;">Junior Back End Developer</span>
<svg style="left:320.9px;top:797.90px" width="34.2" height="34.2" viewBox="0 0 34.2 34.2"><rect width="34.2" height="34.2" rx="6.2" fill="#101010"/><rect x="4.7" y="11.3" width="8.8" height="9.6" rx="2" fill="none" stroke="#d4d4d4" stroke-width="1"/><path d="M9.1 13.3V16.4M7.6 14.2Q6.2 15.4 6.8 17.1Q7.5 18.7 9.1 18.7Q10.7 18.7 11.4 17.1Q12 15.4 10.6 14.2" fill="none" stroke="#d4d4d4" stroke-width="0.9" stroke-linecap="round"/><text x="14.9" y="17.1" font-size="6.8" font-weight="700" fill="#d4d4d4" font-family="Liberation Sans, sans-serif" textLength="15.4" lengthAdjust="spacingAndGlyphs">NEXIT</text><text x="15.2" y="20.3" font-size="2.4" font-weight="700" fill="#bdbdbd" font-family="Liberation Sans, sans-serif" textLength="14.9" lengthAdjust="spacingAndGlyphs">SOLUTIONS</text></svg>
<span class="t" style="left:366px;top:799.84px;font-size:13.3px;color:#c3c8d2;font-weight:700;letter-spacing:-0.249px;">NexIT Solutions</span>
<span class="t" style="left:366px;top:816.29px;font-size:13.3px;color:#cdd1da;letter-spacing:0.020px;">Valentina Esposito</span>
<span class="t" style="left:943.8px;top:807.53px;font-size:14.5px;color:#bcc0cb;letter-spacing:0.014px;">3.9</span>
<svg style="left:968.00px;top:808.00px" width="13.2" height="13" viewBox="0 0 13.2 13"><path d="M6.60 0.65L8.39 4.38L12.50 4.93L9.50 7.79L10.24 11.87L6.60 9.90L2.96 11.87L3.70 7.79L0.70 4.93L4.81 4.38Z" fill="#b4b8c4" stroke="#b4b8c4" stroke-width="0.9" stroke-linejoin="round"/></svg>
<span class="t" style="left:985.4px;top:807.53px;font-size:14.5px;color:#a7acb8;letter-spacing:-0.367px;">(8)</span>
<span class="t" style="left:1021.8px;top:808.63px;font-size:15.2px;color:#b4b8c4;font-weight:700;letter-spacing:0.401px;">390€</span>
<span class="t" style="left:1062.0px;top:808.63px;font-size:15.2px;color:#bfc3ce;letter-spacing:0.194px;">/day</span>
<svg style="left:1108.8px;top:792.9px" width="44" height="44" viewBox="-22 -22 44 44"><circle r="18.4" fill="none" stroke="#c3c7d1" stroke-width="3.8" stroke-linecap="round" stroke-dasharray="35.46 115.61" transform="rotate(-85.2)"/></svg>
<span class="t" style="left:1078.9px;width:100px;text-align:center;top:806.16px;font-size:16px;color:#b4b8c4;font-weight:700;letter-spacing:0.2px;">35</span>
<div class="box" style="left:878px;top:801.8000000000001px;width:48px;height:25.8px;border-radius:6px;background:#f1f2f6"></div>
<svg style="left:886.5px;top:809.6px" width="9" height="11" viewBox="0 0 9 11"><path d="M0.3 1Q0.3 0.2 1.1 0.2H5.6L8.7 3.3V10Q8.7 10.8 7.9 10.8H1.1Q0.3 10.8 0.3 10Z" fill="#d4d7df"/><path d="M4.5 4.6V8.4M2.9 7L4.5 8.6L6.1 7" fill="none" stroke="#f1f2f6" stroke-width="1"/></svg>
<span class="t" style="left:901.75px;top:807.24px;font-size:13.3px;color:#d4d7df;letter-spacing:-0.984px;">CV</span>
<span class="t" style="left:115.5px;top:868.34px;font-size:13.3px;color:#c3c8d2;font-weight:700;letter-spacing:-0.011px;">Martina Pellini</span>
<span class="t" style="left:115.5px;top:884.79px;font-size:13.3px;color:#cdd1da;letter-spacing:-0.145px;">Back End Developer</span>
<svg style="left:320.9px;top:866.40px" width="34.2" height="34.2" viewBox="0 0 34.2 34.2"><rect width="34.2" height="34.2" rx="6.2" fill="#101010"/><rect x="4.7" y="11.3" width="8.8" height="9.6" rx="2" fill="none" stroke="#d4d4d4" stroke-width="1"/><path d="M9.1 13.3V16.4M7.6 14.2Q6.2 15.4 6.8 17.1Q7.5 18.7 9.1 18.7Q10.7 18.7 11.4 17.1Q12 15.4 10.6 14.2" fill="none" stroke="#d4d4d4" stroke-width="0.9" stroke-linecap="round"/><text x="14.9" y="17.1" font-size="6.8" font-weight="700" fill="#d4d4d4" font-family="Liberation Sans, sans-serif" textLength="15.4" lengthAdjust="spacingAndGlyphs">NEXIT</text><text x="15.2" y="20.3" font-size="2.4" font-weight="700" fill="#bdbdbd" font-family="Liberation Sans, sans-serif" textLength="14.9" lengthAdjust="spacingAndGlyphs">SOLUTIONS</text></svg>
<span class="t" style="left:366px;top:868.34px;font-size:13.3px;color:#c3c8d2;font-weight:700;letter-spacing:-0.249px;">NexIT Solutions</span>
<span class="t" style="left:366px;top:884.79px;font-size:13.3px;color:#cdd1da;letter-spacing:0.020px;">Valentina Esposito</span>
<span class="t" style="left:951.4px;top:876.03px;font-size:14.5px;color:#bcc0cb;letter-spacing:0.014px;">4.4</span>
<svg style="left:975.60px;top:876.50px" width="13.2" height="13" viewBox="0 0 13.2 13"><path d="M6.60 0.65L8.39 4.38L12.50 4.93L9.50 7.79L10.24 11.87L6.60 9.90L2.96 11.87L3.70 7.79L0.70 4.93L4.81 4.38Z" fill="#b4b8c4" stroke="#b4b8c4" stroke-width="0.9" stroke-linejoin="round"/></svg>
<span class="t" style="left:993.0px;top:876.03px;font-size:14.5px;color:#a7acb8;letter-spacing:-0.367px;">(4)</span>
<span class="t" style="left:1029.8999999999999px;top:877.13px;font-size:15.2px;color:#b4b8c4;font-weight:700;letter-spacing:0.401px;">430€</span>
<span class="t" style="left:1070.1px;top:877.13px;font-size:15.2px;color:#bfc3ce;letter-spacing:0.038px;">/gg</span>
<svg style="left:1108.8px;top:861.4px" width="44" height="44" viewBox="-22 -22 44 44"><circle r="18.4" fill="none" stroke="#c3c7d1" stroke-width="3.8" stroke-linecap="round" stroke-dasharray="51.65 115.61" transform="rotate(-85.2)"/></svg>
<span class="t" style="left:1080.7px;width:100px;text-align:center;top:874.66px;font-size:16px;color:#b4b8c4;font-weight:700;letter-spacing:0.2px;">49</span>
<div class="box" style="left:886.3px;top:870.3000000000001px;width:48px;height:25.8px;border-radius:6px;background:#f1f2f6"></div>
<svg style="left:894.8px;top:878.1px" width="9" height="11" viewBox="0 0 9 11"><path d="M0.3 1Q0.3 0.2 1.1 0.2H5.6L8.7 3.3V10Q8.7 10.8 7.9 10.8H1.1Q0.3 10.8 0.3 10Z" fill="#d4d7df"/><path d="M4.5 4.6V8.4M2.9 7L4.5 8.6L6.1 7" fill="none" stroke="#f1f2f6" stroke-width="1"/></svg>
<span class="t" style="left:910.05px;top:875.74px;font-size:13.3px;color:#d4d7df;letter-spacing:-0.984px;">CV</span>
</div>
</body></html>
